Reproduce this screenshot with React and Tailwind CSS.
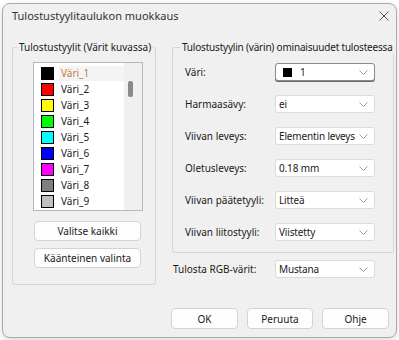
import React from "react";

const items = [
  ["Väri_1", "#000000"],
  ["Väri_2", "#ff0000"],
  ["Väri_3", "#ffff00"],
  ["Väri_4", "#00ff00"],
  ["Väri_5", "#00ffff"],
  ["Väri_6", "#0000ff"],
  ["Väri_7", "#ff00ff"],
  ["Väri_8", "#808080"],
  ["Väri_9", "#c0c0c0"],
];

function Chevron() {
  return (
    <svg width="9" height="5" viewBox="0 0 9 5" className="shrink-0">
      <polyline points="0.5,0.5 4.5,4.5 8.5,0.5" fill="none" stroke="#9a9a9a" strokeWidth="1" />
    </svg>
  );
}

function Combo({ children, focused }) {
  return (
    <div
      className={
        "w-[100px] h-[18px] flex items-center justify-between pl-[3px] pr-[6px] bg-white rounded-[3px] border " +
        (focused ? "border-[#8a8a8a] shadow-[0_1px_0_#6a6a6a]" : "border-[#dadada]")
      }
    >
      <div className="flex items-center text-[10px] leading-[14px] tracking-[-0.15px] text-[#1a1a1a] whitespace-nowrap">{children}</div>
      <Chevron />
    </div>
  );
}

function Row({ label, children, focused }) {
  return (
    <div className="flex items-center h-[18px]">
      <div className="w-[90px] text-[10px] leading-[14px] text-[#1a1a1a] whitespace-nowrap">{label}</div>
      <Combo focused={focused}>{children}</Combo>
    </div>
  );
}

function Btn({ children, className }) {
  return (
    <div
      className={
        "flex items-center justify-center bg-[#fdfdfd] border border-[#d3d3d3] rounded-[4px] text-[10px] leading-[14px] text-[#1a1a1a] " +
        className
      }
    >
      {children}
    </div>
  );
}

export default function App() {
  return (
    <div className="w-[399px] h-[340px] bg-white overflow-hidden pt-[3px] pl-[2px] font-['Noto_Sans',sans-serif]">
      <div className="w-[395px] h-[335px] bg-[#f0f0f0] border border-[#aaaaaa] rounded-[8px] shadow-[0_2px_6px_rgba(0,0,0,0.15)] overflow-hidden flex flex-col">
        {/* title bar */}
        <div className="h-[36px] shrink-0 flex items-start justify-between pl-[9px] pr-[8px] pt-[4px]">
          <div className="text-[11px] leading-[16px] text-[#333333] whitespace-nowrap">Tulostustyylitaulukon muokkaus</div>
          <svg width="10" height="10" viewBox="0 0 10 10" className="mt-[3px] -mr-[1px]">
            <line x1="0.5" y1="0.5" x2="9.5" y2="9.5" stroke="#555" strokeWidth="1" />
            <line x1="9.5" y1="0.5" x2="0.5" y2="9.5" stroke="#555" strokeWidth="1" />
          </svg>
        </div>

        {/* body */}
        <div className="flex pl-[9px] gap-[16px] shrink-0">
          {/* left group */}
          <fieldset className="min-w-0 w-[144px] h-[245px] border border-[#d6d6d6] rounded-[2px] flex flex-col">
            <legend className="ml-[4px] px-[2px] text-[10px] leading-[14px] text-[#1a1a1a] whitespace-nowrap">
              Tulostustyylit (Värit kuvassa)
            </legend>
            <div className="ml-[20px] mt-[8px] w-[110px] h-[149px] border border-[#b7b7c2] bg-white flex overflow-hidden">
              <div className="w-[90px] pt-[2px] flex flex-col">
                {items.map(([name, color], i) => (
                  <div key={name} className="h-[16px] flex items-center shrink-0">
                    <div className="ml-[7px] w-[13px] h-[13px] border border-black shrink-0" style={{ backgroundColor: color }} />
                    <div
                      className={
                        "ml-[5px] flex-1 h-[15px] pl-[2px] flex items-center text-[10px] leading-[14px] " +
                        (i === 0 ? "bg-[#f4f4f4] text-[#c8783c]" : "text-[#1a1a1a]")
                      }
                    >
                      {name}
                    </div>
                  </div>
                ))}
              </div>
              <div className="flex-1 bg-[#f0f0f0] pt-[18px] pl-[4px]">
                <div className="w-[5px] h-[16px] rounded-[2px] bg-[#8a8a8a]" />
              </div>
            </div>
            <Btn className="ml-[21px] mt-[10px] w-[107px] h-[20px]">Valitse kaikki</Btn>
            <Btn className="ml-[21px] mt-[7px] w-[107px] h-[20px]">Käänteinen valinta</Btn>
          </fieldset>

          {/* right column */}
          <div className="flex flex-col">
            <fieldset className="min-w-0 w-[222px] h-[213px] border border-[#d6d6d6] rounded-[2px] flex flex-col">
              <legend className="ml-[7px] px-[2px] text-[10px] leading-[14px] tracking-[-0.2px] text-[#1a1a1a] whitespace-nowrap">
                Tulostustyylin (värin) ominaisuudet tulosteessa
              </legend>
              <div className="mt-[9px] pl-[12px] flex flex-col gap-[14px]">
                <Row label="Väri:" focused>
                  <span className="ml-[4px] w-[9px] h-[9px] bg-black inline-block" />
                  <span className="ml-[8px]">1</span>
                </Row>
                <Row label="Harmaasävy:">ei</Row>
                <Row label="Viivan leveys:">Elementin leveys</Row>
                <Row label="Oletusleveys:">0.18 mm</Row>
                <Row label="Viivan päätetyyli:">Litteä</Row>
                <Row label="Viivan liitostyyli:">Viistetty</Row>
              </div>
            </fieldset>
            <div className="mt-[7px] pl-[1px] flex items-center h-[18px]">
              <div className="w-[102px] text-[10px] leading-[14px] text-[#1a1a1a] whitespace-nowrap">Tulosta RGB-värit:</div>
              <Combo>Mustana</Combo>
            </div>
          </div>
        </div>

        {/* bottom buttons */}
        <div className="mt-[23px] flex justify-end gap-[9px] pr-[7px]">
          <Btn className="w-[67px] h-[21px]">OK</Btn>
          <Btn className="w-[66px] h-[21px]">Peruuta</Btn>
          <Btn className="w-[67px] h-[21px]">Ohje</Btn>
        </div>
      </div>
    </div>
  );
}
